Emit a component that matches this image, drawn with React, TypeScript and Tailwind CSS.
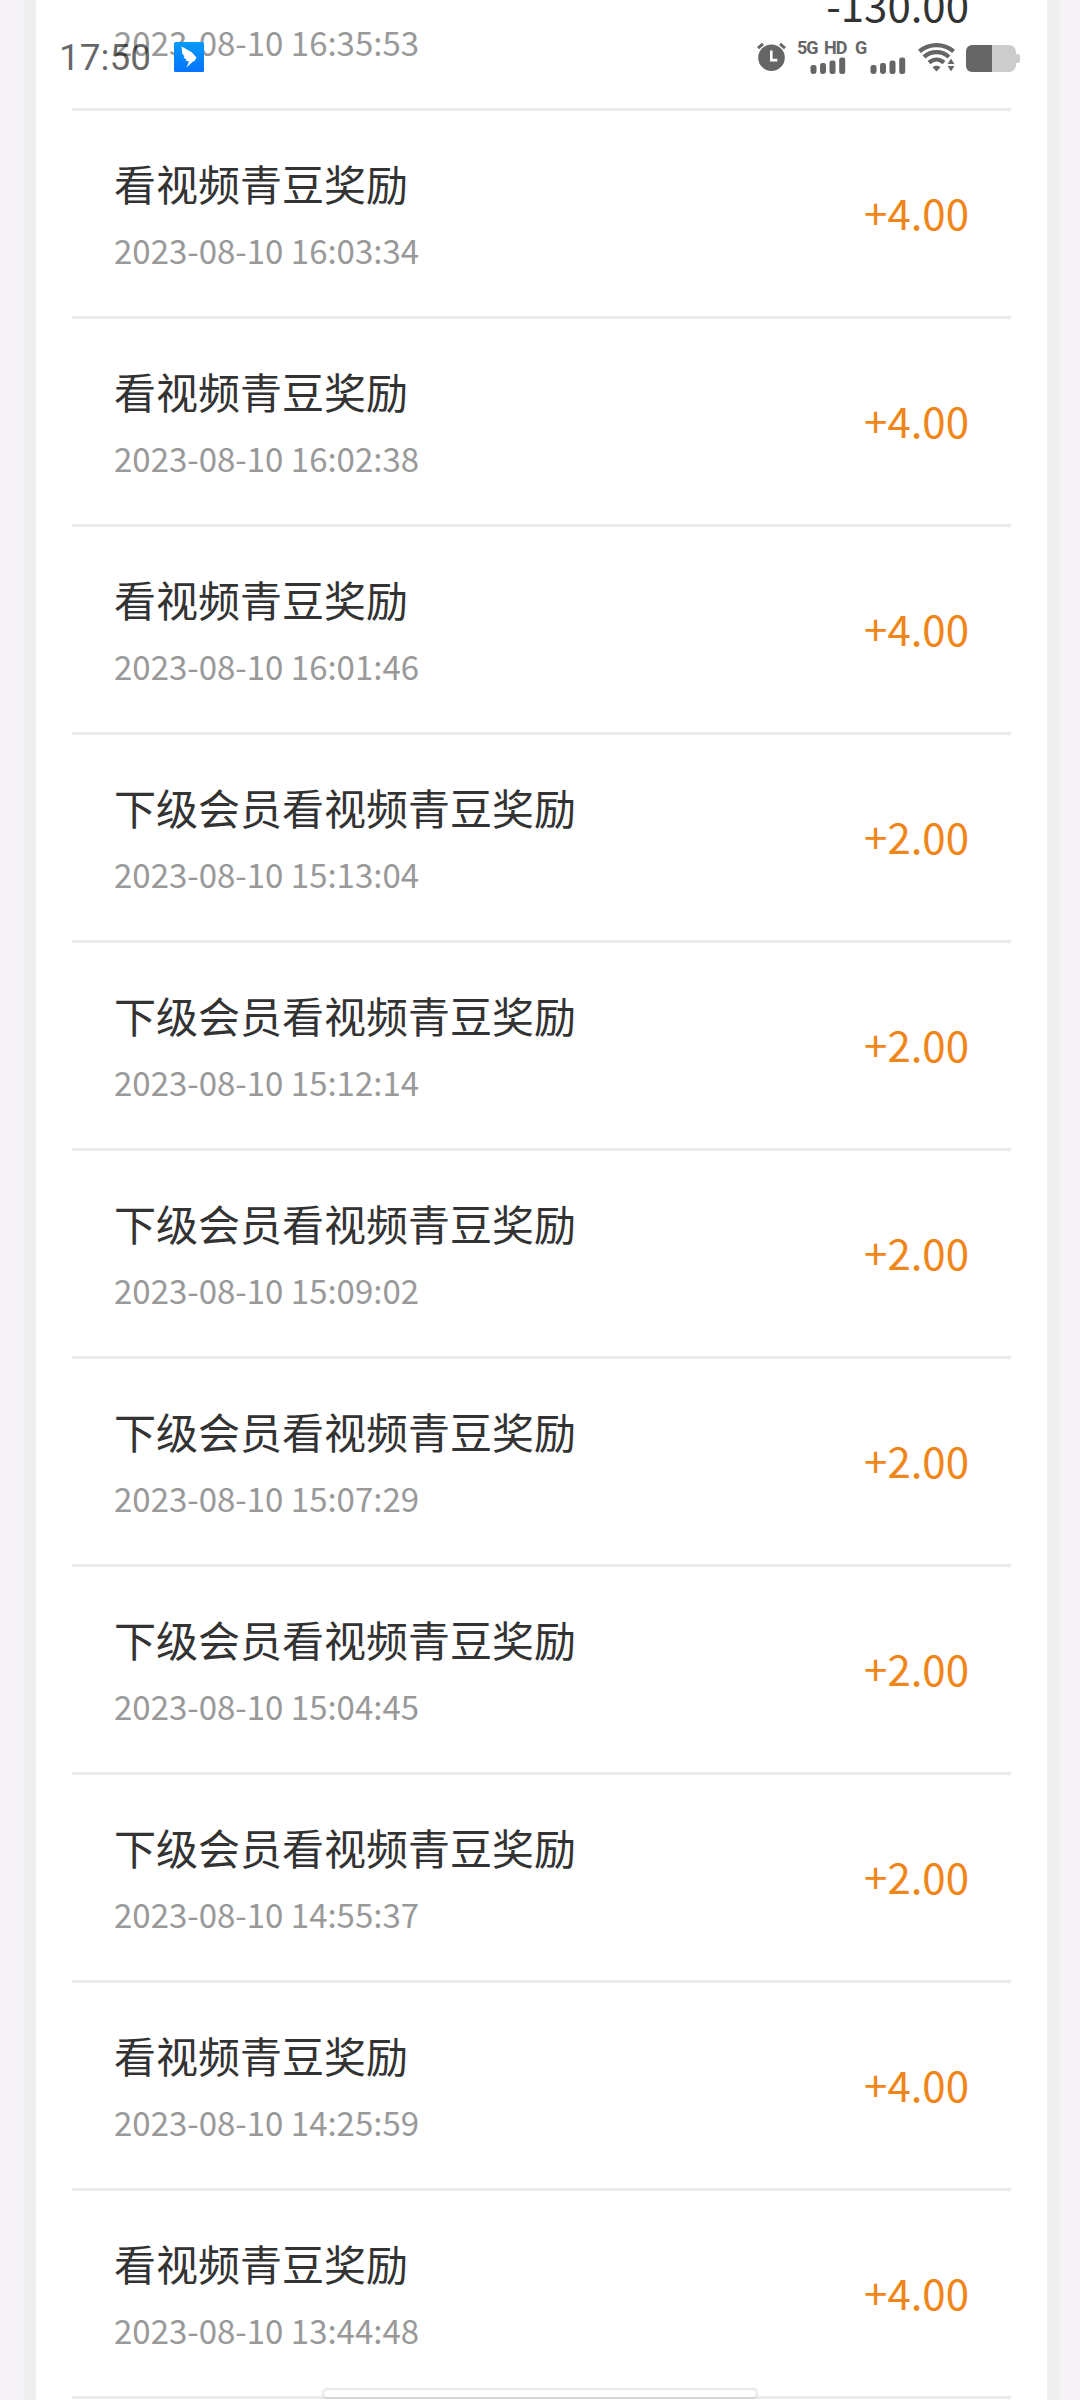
type Entry = {
  title: string;
  time: string;
  amount: string;
};

const WATCH = "看视频青豆奖励";
const REFERRAL = "下级会员看视频青豆奖励";

const entries: Entry[] = [
  { title: WATCH, time: "2023-08-10 16:35:53", amount: "-130.00" },
  { title: WATCH, time: "2023-08-10 16:03:34", amount: "+4.00" },
  { title: WATCH, time: "2023-08-10 16:02:38", amount: "+4.00" },
  { title: WATCH, time: "2023-08-10 16:01:46", amount: "+4.00" },
  { title: REFERRAL, time: "2023-08-10 15:13:04", amount: "+2.00" },
  { title: REFERRAL, time: "2023-08-10 15:12:14", amount: "+2.00" },
  { title: REFERRAL, time: "2023-08-10 15:09:02", amount: "+2.00" },
  { title: REFERRAL, time: "2023-08-10 15:07:29", amount: "+2.00" },
  { title: REFERRAL, time: "2023-08-10 15:04:45", amount: "+2.00" },
  { title: REFERRAL, time: "2023-08-10 14:55:37", amount: "+2.00" },
  { title: WATCH, time: "2023-08-10 14:25:59", amount: "+4.00" },
  { title: WATCH, time: "2023-08-10 13:44:48", amount: "+4.00" },
];

function EntryRow({ title, time, amount }: Entry) {
  const spent = amount.startsWith("-");

  return (
    <li className="flex h-[208px] items-center justify-between border-b-[3px] border-[#ebebeb] px-[42px]">
      <div className="pb-px">
        <p className="text-[42px] leading-[61px] text-[#333]">{title}</p>
        <p className="mt-[13px] text-[33px] leading-[48px] text-[#999]">{time}</p>
      </div>
      <span
        className={
          spent
            ? "pb-[3px] text-[42px] leading-[62px] text-[#333]"
            : "pb-[3px] text-[42px] leading-[62px] text-[#f08519]"
        }
      >
        {amount}
      </span>
    </li>
  );
}

function SignalBars() {
  return (
    <svg className="h-[17px] w-[36px]" viewBox="0 0 36 17" fill="currentColor" aria-hidden="true">
      <rect x="0.5" y="8" width="6" height="9" rx="2.4" />
      <rect x="10" y="6" width="6" height="11" rx="2.4" />
      <rect x="19.5" y="3.5" width="6" height="13.5" rx="2.2" />
      <rect x="29.2" y="0.5" width="6" height="16.5" rx="2.2" />
    </svg>
  );
}

function StatusBar() {
  return (
    <header className="absolute inset-x-0 top-0 z-10 flex h-[114px] items-center pl-[59px] pr-[60px] font-[Roboto,sans-serif] text-black/60">
      <span className="text-[37px] leading-none">17:50</span>
      <svg className="ml-[23px] size-[30px]" viewBox="0 0 30 30" aria-hidden="true">
        <defs>
          <linearGradient id="wing" x1="0" y1="0" x2="0" y2="1">
            <stop offset="0" stopColor="#069bfb" />
            <stop offset="1" stopColor="#0673fb" />
          </linearGradient>
        </defs>
        <rect width="30" height="30" rx="1.5" fill="url(#wing)" />
        <path
          d="M7.5 4.5 17.5 10 22.5 15.5 20.5 19 19 19.5 12.5 25.5 15 19.5 11.5 18.5 12.5 17.5 9.5 15.5 10.5 14.5 8.2 11.5Z"
          fill="#fff"
        />
      </svg>

      <div className="ml-auto flex items-center text-[#666]">
        <svg className="size-[30px]" viewBox="0 0 30 30" aria-hidden="true">
          <path d="M1 6.2 6 1.8M28 6.2 23 1.8" stroke="#666" strokeWidth="3" fill="none" />
          <circle cx="14.5" cy="15.7" r="13.3" fill="#666" />
          <path d="M14.3 8.5v9.6h6" stroke="#fff" strokeWidth="2.6" fill="none" />
        </svg>
        <div className="ml-[10px] w-[49px]">
          <p className="whitespace-nowrap text-[18px] font-bold leading-[14px] tracking-[-1px] [word-spacing:3px]">
            5G HD
          </p>
          <div className="mt-[2px] pl-[13px]">
            <SignalBars />
          </div>
        </div>
        <div className="ml-[9px] w-[51px]">
          <p className="text-[18px] font-bold leading-[14px]">G</p>
          <div className="mt-[2px] pl-[15px]">
            <SignalBars />
          </div>
        </div>
        <svg className="ml-[12px] h-[30px] w-[37px]" viewBox="0 0 37 30" aria-hidden="true">
          <g stroke="#666" fill="none" strokeWidth="4.2">
            <path d="M1.4 9.4C11 1 26 1 35.6 9.4" />
            <path d="M6 15C13 8.6 24 8.6 31 15" />
            <path d="M11 20.6C15.5 16.6 21.5 16.6 26 20.6" />
          </g>
          <path d="M14.5 25.2C17 23.4 20 23.4 22.5 25.2L18.5 29.5Z" fill="#666" />
          <path d="M29.6 22 33 16.6 36.4 22ZM29.6 24H36.4L33 29.4Z" fill="#666" />
        </svg>
        <svg className="ml-[11px] mt-[2px] h-[27px] w-[54px]" viewBox="0 0 54 27" aria-hidden="true">
          <path d="M26 0H43a7 7 0 0 1 7 7V20a7 7 0 0 1-7 7H26Z" fill="#ccc" />
          <path d="M50 9h2a2 2 0 0 1 2 2v5a2 2 0 0 1-2 2h-2Z" fill="#ccc" />
          <path d="M26 0H6a6 6 0 0 0-6 6V21a6 6 0 0 0 6 6H26Z" fill="#666" />
        </svg>
      </div>
    </header>
  );
}

export default function App() {
  return (
    <div className="relative h-[2400px] w-[1080px] overflow-hidden bg-[#f5f3f6] font-['Noto_Sans_CJK_SC',sans-serif]">
      <StatusBar />
      <main className="ml-[36px] flow-root h-full w-[1011px] bg-white px-[36px] shadow-[0_0_4px_12px_#eeeeee]">
        <ul className="-mt-[97px]">
          {entries.map((entry) => (
            <EntryRow key={entry.time} {...entry} />
          ))}
        </ul>
      </main>
      <div className="absolute bottom-[1px] left-[322px] h-[11px] w-[436px] rounded-[5px] border-2 border-[#ebe8e9] border-b-[#d6d4d5] bg-white" />
    </div>
  );
}
